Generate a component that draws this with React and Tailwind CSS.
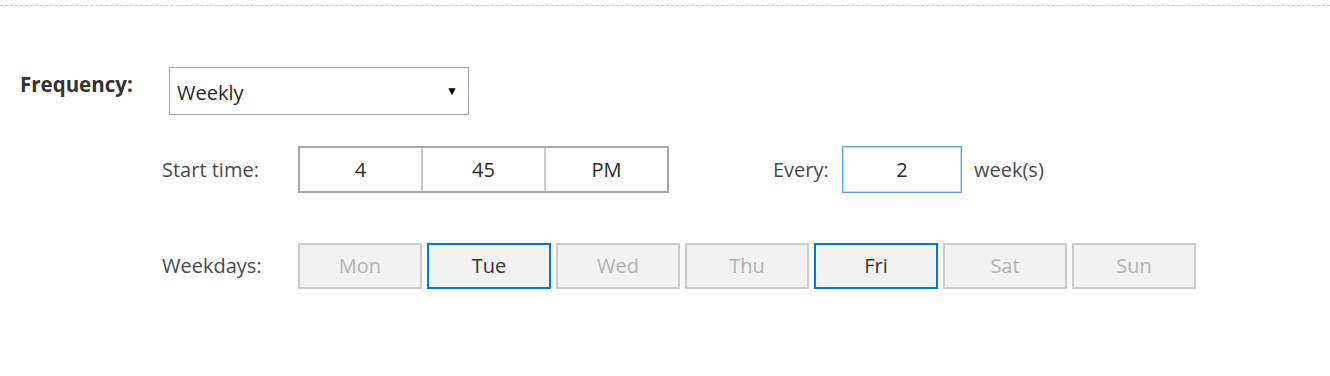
const DAYS = [
  { key: "mon", label: "Mon", on: false },
  { key: "tue", label: "Tue", on: true },
  { key: "wed", label: "Wed", on: false },
  { key: "thu", label: "Thu", on: false },
  { key: "fri", label: "Fri", on: true },
  { key: "sat", label: "Sat", on: false },
  { key: "sun", label: "Sun", on: false },
];

function DayButton({ day }) {
  return (
    <button
      className={`w-[124px] h-[46px] border-2 bg-[#f2f2f2] text-[20px] leading-none
                  ${day.on ? "border-[#0078d7] text-[#333]" : "border-[#cccccc] text-[#b3b3b3]"}`}
    >
      {day.label}
    </button>
  );
}

export default function App() {
  return (
    <div
      className="w-[1330px] h-[376px] bg-white pt-[5px]"
      style={{ fontFamily: '"Open Sans", "Liberation Sans", sans-serif' }}
    >
      <div className="border-t border-dashed border-[#c8c8c8]" />

      <div className="flex items-start pt-[61px] pl-[20px]">
        <span className="w-[149px] pt-[4px] text-[20.5px] leading-[26px] font-bold text-[#333]">
          Frequency:
        </span>
        <div className="w-[300px] h-[48px] border border-[#a0a0a0] flex items-center justify-between pl-[7px] pr-[10px]">
          <span className="text-[20px] text-[#2a2a2a] pt-[3px]">Weekly</span>
          <span className="text-[12px] text-black">▼</span>
        </div>
      </div>

      <div className="pl-[162px] pt-[31px] flex flex-col gap-[50px]">
        <div className="flex items-center">
          <span className="w-[136px] text-[20px] text-[#4a4a4a]">Start time:</span>
          <div className="flex w-[371px] h-[47px] border-2 border-[#a6a6a6]">
            <div className="flex-1 flex items-center justify-center text-[20px] text-[#2a2a2a] border-r-2 border-[#cccccc]">4</div>
            <div className="flex-1 flex items-center justify-center text-[20px] text-[#2a2a2a] border-r-2 border-[#cccccc]">45</div>
            <div className="flex-1 flex items-center justify-center text-[20px] text-[#2a2a2a]">PM</div>
          </div>
          <span className="ml-[104px] w-[69px] text-[20px] text-[#4a4a4a]">Every:</span>
          <div className="w-[120px] h-[47px] border border-[#5a9fe6] ring-1 ring-inset ring-[#c5def7] flex items-center justify-center text-[20px] text-[#2a2a2a]">
            2
          </div>
          <span className="ml-[12px] text-[20px] text-[#4a4a4a]">week(s)</span>
        </div>

        <div className="flex items-center">
          <span className="w-[136px] text-[20px] text-[#4a4a4a]">Weekdays:</span>
          <div className="flex gap-[5px]">
            {DAYS.map((d) => (
              <DayButton key={d.key} day={d} />
            ))}
          </div>
        </div>
      </div>
    </div>
  );
}
